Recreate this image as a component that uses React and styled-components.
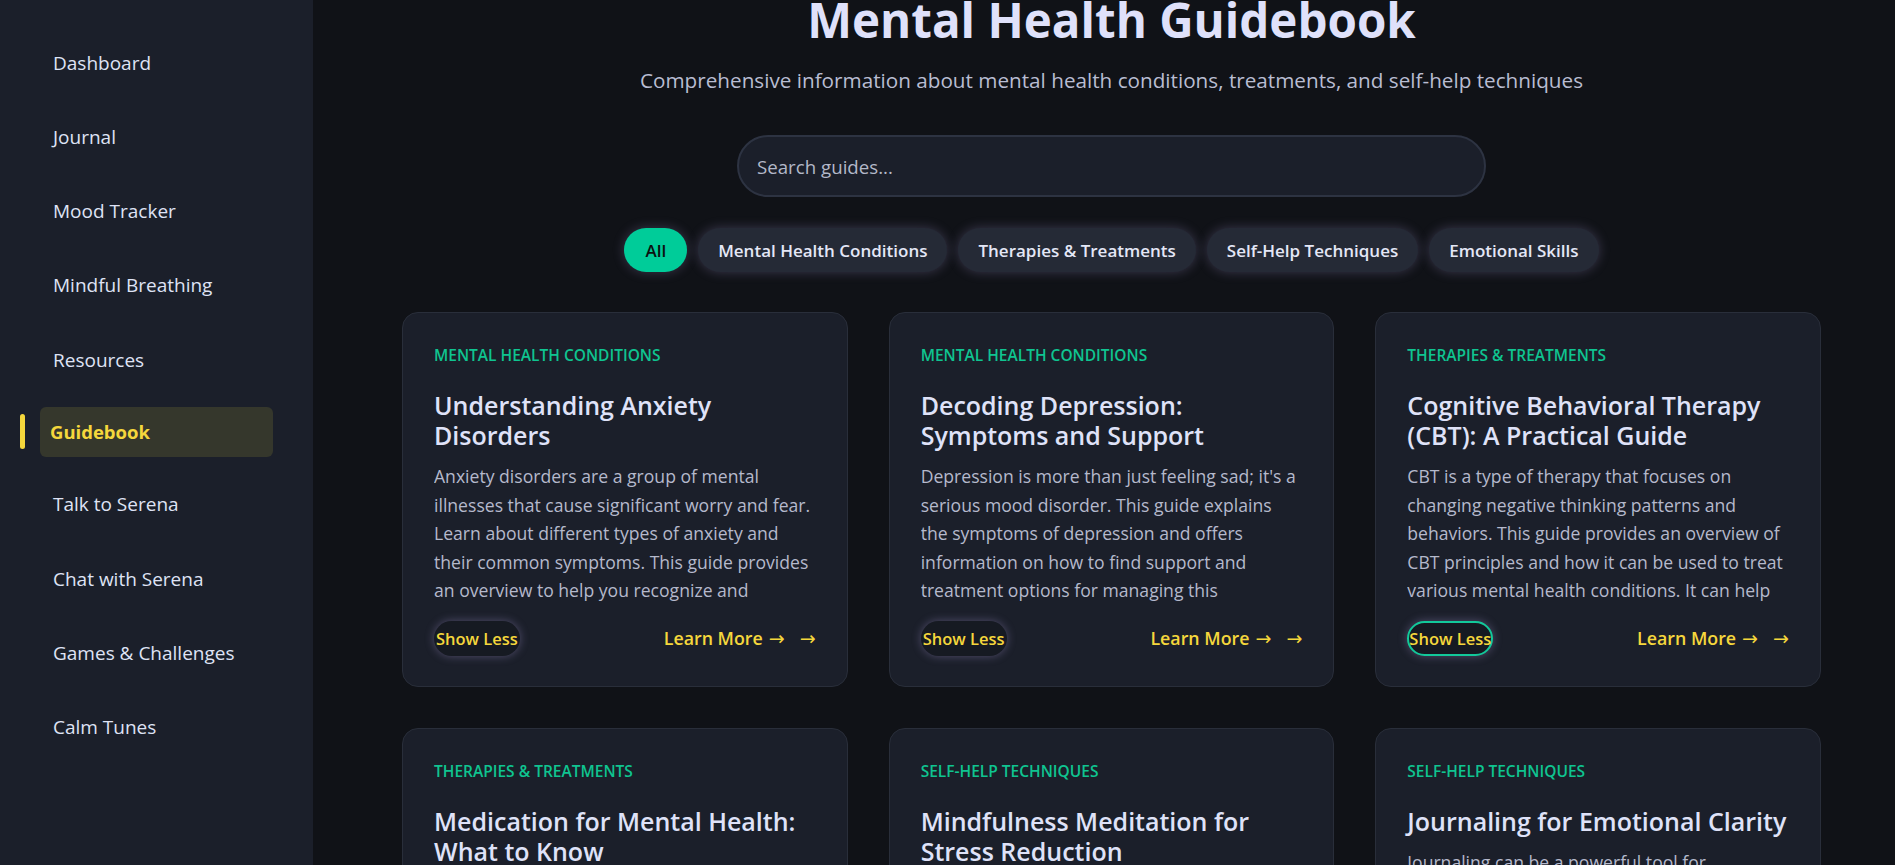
import styled, { createGlobalStyle } from "styled-components"

const GlobalStyle = createGlobalStyle`
    * { box-sizing: border-box; }
    body {
        margin: 0;
        background: #101217;
        font-family: "Open Sans", "Noto Sans", sans-serif;
        color: #dfe2f6;
    }
`

const Layout = styled.div`
    display: flex;
    min-height: 100vh;
`

const Sidebar = styled.nav`
    width: 313px;
    flex-shrink: 0;
    height: 100vh;
    position: sticky;
    top: 0;
    background: #1b1f2a;
    padding: 35px 40px 0;
    display: flex;
    flex-direction: column;
    gap: 19.3px;
`

const NavItem = styled.a`
    position: relative;
    display: flex;
    align-items: center;
    flex-shrink: 0;
    height: ${(p) => (p.active ? "50px" : "55px")};
    margin: ${(p) => (p.active ? "0.5px 0" : "0")};
    padding-left: ${(p) => (p.active ? "10px" : "13px")};
    border-radius: 6px;
    font-size: ${(p) => (p.active ? "18.5px" : "19px")};
    font-weight: ${(p) => (p.active ? 700 : 400)};
    color: ${(p) => (p.active ? "#f5d73c" : "#dfe3f5")};
    background: ${(p) => (p.active ? "#35372c" : "transparent")};
    cursor: pointer;

    &::before {
        content: "";
        display: ${(p) => (p.active ? "block" : "none")};
        position: absolute;
        left: -20px;
        top: 7px;
        width: 5px;
        height: 35px;
        border-radius: 3px;
        background: #f5d73c;
    }
`

const Main = styled.main`
    flex: 1;
    padding: 0 74px 40px 89px;
`

const Header = styled.header`
    display: flex;
    flex-direction: column;
    align-items: center;
`

const Title = styled.h1`
    margin: -4px 0 0;
    font-size: 47.5px;
    line-height: 48px;
    font-weight: 700;
    color: #dfe1fa;
`

const Subtitle = styled.p`
    margin: 23px 0 0;
    font-size: 20.7px;
    line-height: 26px;
    color: #b9bdd2;
`

const Search = styled.input`
    margin-top: 42px;
    width: 749px;
    height: 62px;
    border-radius: 31px;
    border: 2px solid #2d3342;
    background: #1b1f2a;
    padding: 0 18px;
    font-family: inherit;
    font-size: 18.7px;
    color: #e0e3f0;
    outline: none;

    &::placeholder {
        color: #b3b8c8;
    }
`

const Filters = styled.div`
    margin-top: 31px;
    display: flex;
    gap: 11px;
`

const FilterPill = styled.button`
    height: 44px;
    padding: 0 ${(p) => (p.active ? "21px" : "20px")};
    border: none;
    border-radius: 22px;
    font-family: inherit;
    font-size: 17px;
    font-weight: 600;
    color: ${(p) => (p.active ? "#0c1210" : "#e4e7f6")};
    background: ${(p) => (p.active ? "#00cc99" : "#252a36")};
    box-shadow: 0 0 12px rgba(170, 155, 215, 0.28);
    cursor: pointer;
`

const Grid = styled.section`
    margin-top: 40px;
    display: grid;
    grid-template-columns: repeat(3, 1fr);
    gap: 41px 41px;
`

const Card = styled.article`
    display: flex;
    flex-direction: column;
    background: #1b1f2a;
    border: 1px solid #292e3a;
    border-radius: 16px;
    padding: 32px 31px 30px;
`

const Category = styled.span`
    font-size: 15.5px;
    line-height: 20px;
    font-weight: 600;
    text-transform: uppercase;
    color: #0fc490;
`

const CardTitle = styled.h2`
    margin: 25px 0 12px;
    font-size: 25px;
    line-height: 30px;
    font-weight: 600;
    color: #dfe2f8;
`

const Description = styled.p`
    margin: 0;
    font-size: 17.6px;
    line-height: 28.5px;
    color: #b5b9cc;
    height: 142.5px;
    overflow: hidden;
`

const CardFooter = styled.div`
    margin-top: auto;
    padding-top: 16px;
    display: flex;
    align-items: center;
    justify-content: space-between;
`

const ShowLess = styled.button`
    height: 35px;
    padding: 0;
    border: 2px solid ${(p) => (p.focused ? "#12c99a" : "transparent")};
    border-radius: 18px;
    background: #161a22;
    box-shadow: 0 0 10px rgba(165, 150, 210, 0.4);
    font-family: inherit;
    font-size: 16.5px;
    font-weight: 600;
    color: #f5d73c;
    cursor: pointer;
`

const LearnMore = styled.a`
    display: flex;
    align-items: center;
    font-size: 17.8px;
    font-weight: 600;
    color: #f5d73c;
    cursor: pointer;
`

const Arrows = styled.span`
    margin-left: 6px;
    font-family: "DejaVu Sans", sans-serif;
    font-size: 19px;
    font-weight: 400;
    word-spacing: 9px;
`

const navItems = [
    "Dashboard",
    "Journal",
    "Mood Tracker",
    "Mindful Breathing",
    "Resources",
    "Guidebook",
    "Talk to Serena",
    "Chat with Serena",
    "Games & Challenges",
    "Calm Tunes",
]

const filters = ["All", "Mental Health Conditions", "Therapies & Treatments", "Self-Help Techniques", "Emotional Skills"]

const guides = [
    {
        category: "Mental Health Conditions",
        title: "Understanding Anxiety Disorders",
        text: "Anxiety disorders are a group of mental illnesses that cause significant worry and fear. Learn about different types of anxiety and their common symptoms. This guide provides an overview to help you recognize and understand anxiety in yourself and others.",
    },
    {
        category: "Mental Health Conditions",
        title: "Decoding Depression: Symptoms and Support",
        text: "Depression is more than just feeling sad; it's a serious mood disorder. This guide explains the symptoms of depression and offers information on how to find support and treatment options for managing this condition.",
    },
    {
        category: "Therapies & Treatments",
        title: "Cognitive Behavioral Therapy (CBT): A Practical Guide",
        text: "CBT is a type of therapy that focuses on changing negative thinking patterns and behaviors. This guide provides an overview of CBT principles and how it can be used to treat various mental health conditions. It can help you build healthier habits.",
        focused: true,
    },
    {
        category: "Therapies & Treatments",
        title: "Medication for Mental Health: What to Know",
        text: "Medication can be an important part of treatment for many mental health conditions. Learn about common types of medication, how they work, and what to discuss with your doctor.",
    },
    {
        category: "Self-Help Techniques",
        title: "Mindfulness Meditation for Stress Reduction",
        text: "Mindfulness meditation helps you stay present and reduce stress. This guide walks you through simple practices you can start today to calm your mind and body.",
    },
    {
        category: "Self-Help Techniques",
        title: "Journaling for Emotional Clarity",
        text: "Journaling can be a powerful tool for processing emotions and gaining insight into your thoughts. Discover prompts and techniques to make journaling part of your routine.",
    },
]

const App = () => {
    return (
        <Layout>
            <GlobalStyle />
            <Sidebar>
                {navItems.map((item) => (
                    <NavItem key={item} active={item === "Guidebook"}>
                        {item}
                    </NavItem>
                ))}
            </Sidebar>
            <Main>
                <Header>
                    <Title>Mental Health Guidebook</Title>
                    <Subtitle>Comprehensive information about mental health conditions, treatments, and self-help techniques</Subtitle>
                    <Search placeholder="Search guides..." />
                    <Filters>
                        {filters.map((f) => (
                            <FilterPill key={f} active={f === "All"}>
                                {f}
                            </FilterPill>
                        ))}
                    </Filters>
                </Header>
                <Grid>
                    {guides.map((g) => (
                        <Card key={g.title}>
                            <Category>{g.category}</Category>
                            <CardTitle>{g.title}</CardTitle>
                            <Description>{g.text}</Description>
                            <CardFooter>
                                <ShowLess focused={g.focused}>Show Less</ShowLess>
                                <LearnMore>
                                    Learn More<Arrows>→ →</Arrows>
                                </LearnMore>
                            </CardFooter>
                        </Card>
                    ))}
                </Grid>
            </Main>
        </Layout>
    )
}

export default App
